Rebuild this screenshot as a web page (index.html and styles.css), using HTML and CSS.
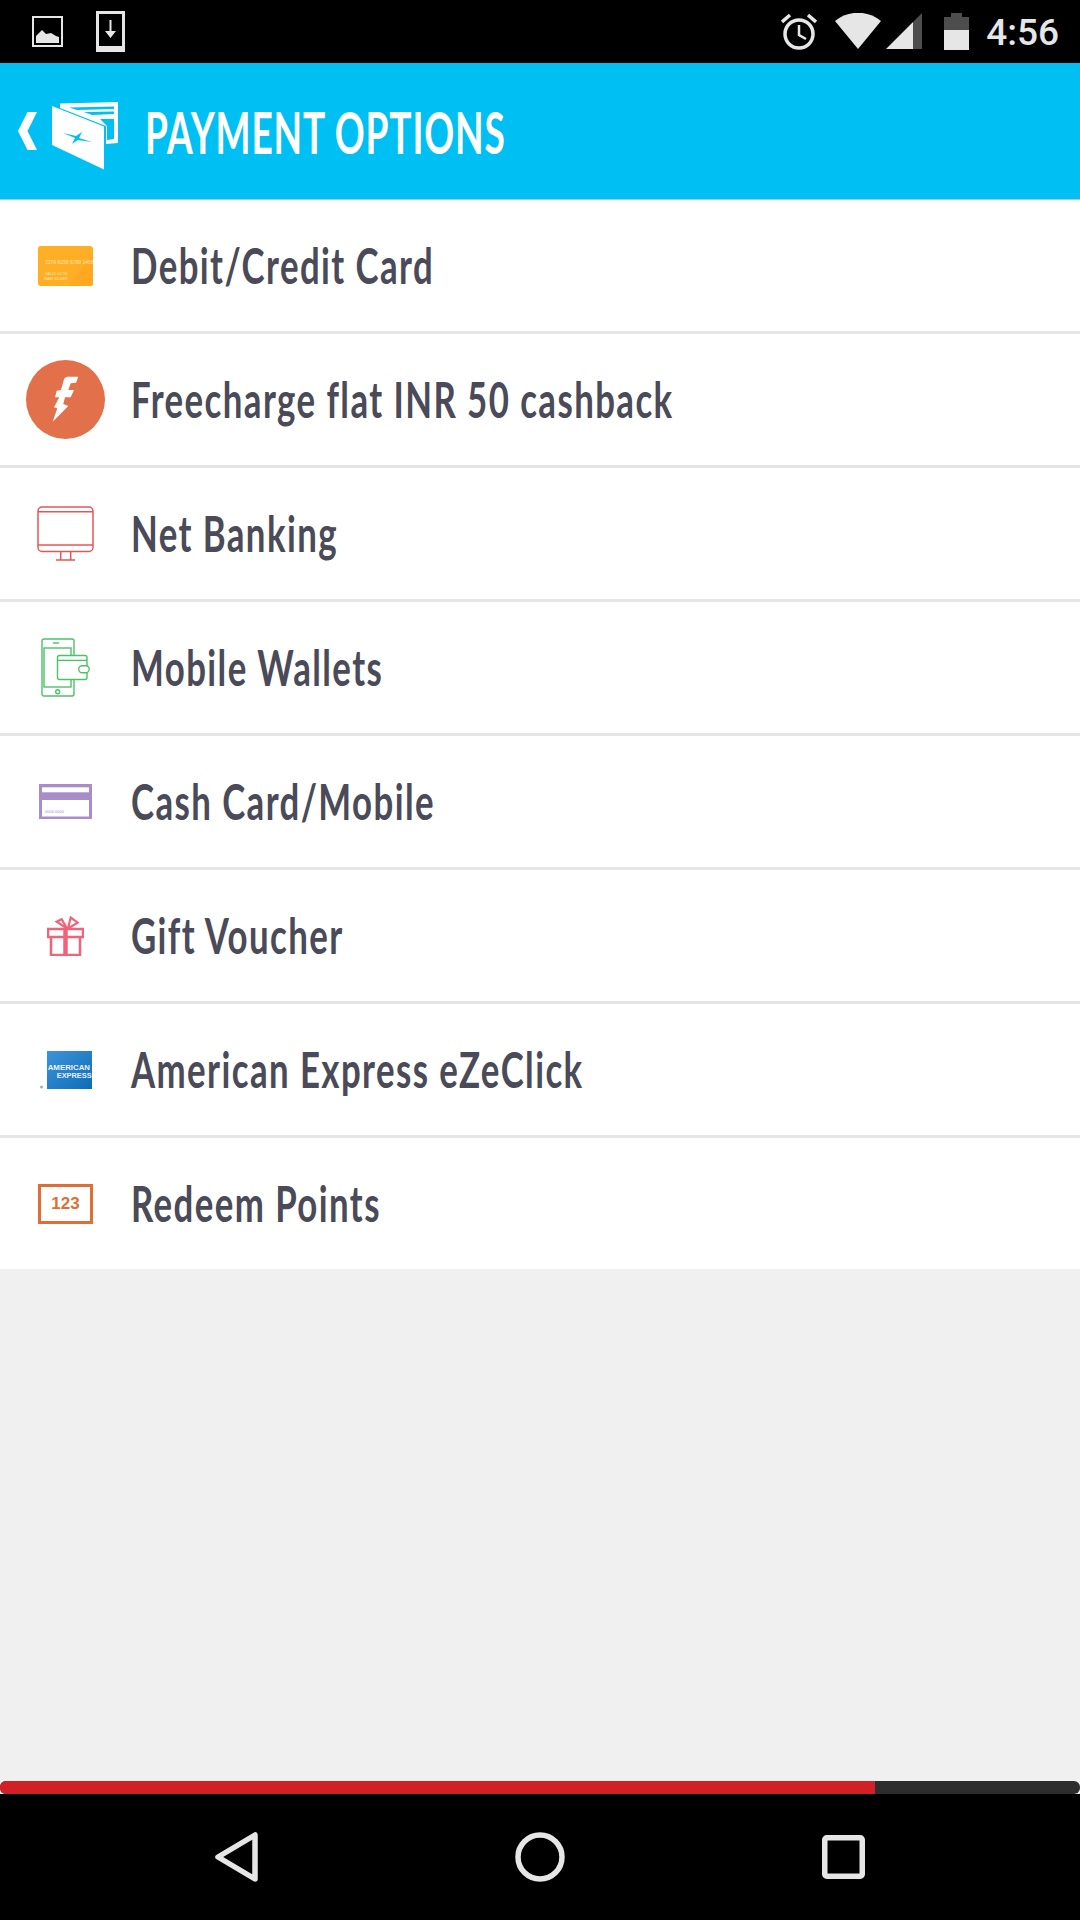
FILE: index.html

```html
<!DOCTYPE html>
<html lang="en">
<head>
  <meta charset="UTF-8">
  <meta name="viewport" content="width=device-width, initial-scale=1.0">
  <title>Payment Options</title>
  <link rel="stylesheet" href="styles.css">
</head>
<body>
  <div class="status-bar">
    <div class="status-left">
      <svg class="ic-image" width="31" height="31" viewBox="0 0 31 31">
        <rect x="1" y="1" width="29" height="29" fill="none" stroke="#e6e6e6" stroke-width="2"/>
        <path d="M4 27V20L10 14L14 18L19 17L24 20L27 21V27Z" fill="#e6e6e6"/>
      </svg>
      <svg class="ic-download" width="29" height="41" viewBox="0 0 29 41">
        <path d="M0 0H29V41H0Z M3 3V35H26V3Z" fill="#e6e6e6" fill-rule="evenodd"/>
        <path d="M13.5 9H15.5V20H20L14.500 27L9 20H13.500Z" fill="#e6e6e6"/>
      </svg>
    </div>
    <div class="status-right">
      <svg class="ic-alarm" width="36" height="37" viewBox="0 0 36 37">
        <circle cx="18" cy="21" r="14" fill="none" stroke="#e6e6e6" stroke-width="3.500"/>
        <path d="M18 12V22L25 26" fill="none" stroke="#e6e6e6" stroke-width="2.500"/>
        <path d="M1 9L9 2M35 9L27 2" stroke="#e6e6e6" stroke-width="3.500"/>
      </svg>
      <svg class="ic-wifi" width="46" height="36" viewBox="0 0 46 36">
        <path d="M0 8C13 -3 33 -3 46 8L23 36Z" fill="#e6e6e6"/>
      </svg>
      <svg class="ic-signal" width="36" height="36" viewBox="0 0 36 36">
        <path d="M27 9V36H0Z" fill="#e6e6e6"/>
        <path d="M27 9L36 0V36H27Z" fill="#4d4d4d"/>
      </svg>
      <svg class="ic-battery" width="25" height="37" viewBox="0 0 25 37">
        <path d="M0 4H7V0H18V4H25V17H0Z" fill="#4d4d4d"/>
        <rect y="17" width="25" height="20" fill="#e6e6e6"/>
      </svg>
      <span class="clock">4:56</span>
    </div>
  </div>

  <header>
    <svg class="back" width="19" height="38" viewBox="0 0 19 38">
      <path d="M9.500 0H19L9.500 19L19 38H9.500L0 19Z" fill="#fff"/>
    </svg>
    <svg class="wallet" width="67" height="68" viewBox="0 0 67 68">
      <path d="M8 1.500L66 0V41L54 42V24L8 6Z" fill="#fff"/>
      <path d="M17 5.500L62 4.500V7L25 8Z M32 10L62 9.500V12L40 13Z M48 17L62 17V37L55 38V24Z" fill="#00bff3"/>
      <path d="M0 4L52 24.500V67.500L0 43Z" fill="#fff"/>
      <path d="M11 31L24 34L30 30L27 36L40 40L26 38L20 42L23 36Z" fill="#00bff3"/>
    </svg>
    <h1 class="title">PAYMENT OPTIONS</h1>
  </header>

  <ul class="options">
    <li>
      <div class="opt-icon">
        <svg width="55" height="40" viewBox="0 0 55 40">
          <rect width="55" height="40" rx="3" fill="#ffae25"/>
          <path d="M30 40L55 8V37C55 39 54 40 52 40Z" fill="#ffa820"/>
          <text class="tiny" x="7" y="18" font-size="5" fill="#ffe6b0">3379 8258 6789 1456</text>
          <text class="tiny" x="7" y="29" font-size="4" fill="#ffe6b0">VALID  07/16</text>
          <text class="tiny" x="6" y="34" font-size="4" fill="#ffe6b0">RAM SILVER</text>
        </svg>
      </div>
      <span class="label">Debit/Credit Card</span>
    </li>
    <li>
      <div class="opt-icon">
        <svg width="79" height="79" viewBox="0 0 79 79">
          <circle cx="39.500" cy="39.500" r="39.500" fill="#e2704b"/>
          <path d="M52.300 16.700L50 22.700L44.700 23.300L42.300 30L48 30L44.700 37.300L39 37.300L37.300 44L42.300 46L26.700 61.700L31.300 48.300L28 47.300L33.300 37.300L29 37.300L30.700 30.700L35 30L37.300 21.700C38 18 40 16.700 42.300 16.700Z" fill="#fff"/>
        </svg>
      </div>
      <span class="label">Freecharge flat INR 50 cashback</span>
    </li>
    <li>
      <div class="opt-icon">
        <svg width="57" height="55" viewBox="0 0 57 55" fill="none" stroke="#e85555" stroke-width="1.500">
          <rect x="1" y="1" width="55" height="44.500" rx="4"/>
          <path d="M1 5.700H56M1 39H56M23.700 45.500V54M33.700 45.500V54M19 54H38"/>
        </svg>
      </div>
      <span class="label">Net Banking</span>
    </li>
    <li>
      <div class="opt-icon">
        <svg width="49" height="59" viewBox="0 0 49 59" fill="none" stroke="#4fc06a" stroke-width="1.400">
          <rect x="1" y="1" width="32" height="57" rx="2"/>
          <rect x="3" y="10" width="27" height="39"/>
          <path d="M12 5H18"/>
          <circle cx="16.700" cy="53.700" r="2"/>
          <rect x="16.500" y="17.500" width="29.500" height="24" rx="2" fill="#fff"/>
          <path d="M16.500 22.400H46"/>
          <rect x="37.700" y="27.700" width="10.500" height="7" rx="3.500" fill="#fff"/>
        </svg>
      </div>
      <span class="label">Mobile Wallets</span>
    </li>
    <li>
      <div class="opt-icon">
        <svg width="53" height="35" viewBox="0 0 53 35">
          <rect width="53" height="35" fill="#a98cc9"/>
          <rect x="3" y="3.300" width="47" height="5" fill="#fff"/>
          <rect x="3" y="16" width="47" height="16.500" fill="#fff"/>
          <text class="tiny" x="6" y="29" font-size="4" fill="#a98cc9">0000 0000</text>
        </svg>
      </div>
      <span class="label">Cash Card/Mobile</span>
    </li>
    <li>
      <div class="opt-icon">
        <svg width="37" height="40" viewBox="0 0 37 40" fill="none" stroke="#f0637a" stroke-width="2.500">
          <path d="M1 13H36V21H1ZM4 21V39H33V21"/>
          <path d="M18.500 13V39" stroke-width="4.500"/>
          <path d="M20 12.500L9.700 5.700L14.700 3.300ZM21 12.500L23.700 1.500L30.700 6.700Z" stroke-width="2.200"/>
        </svg>
      </div>
      <span class="label">Gift Voucher</span>
    </li>
    <li>
      <div class="opt-icon">
        <svg width="52" height="38" viewBox="0 0 52 38">
          <defs>
            <linearGradient id="amexBlue" x1="0" y1="0" x2="1" y2="1">
              <stop offset="0" stop-color="#3d94da"/>
              <stop offset="1" stop-color="#0d6cb8"/>
            </linearGradient>
          </defs>
          <rect x="7" width="45" height="38" fill="url(#amexBlue)"/>
          <circle cx="1.500" cy="36" r="1.500" fill="#8fb6cc"/>
          <text class="amex" x="7.700" y="19" font-size="7.500" textLength="42.300" lengthAdjust="spacingAndGlyphs">AMERICAN</text>
          <text class="amex" x="16.700" y="27" font-size="7.500" textLength="35" lengthAdjust="spacingAndGlyphs">EXPRESS</text>
        </svg>
      </div>
      <span class="label">American Express eZeClick</span>
    </li>
    <li>
      <div class="opt-icon">
        <div class="points">123</div>
      </div>
      <span class="label">Redeem Points</span>
    </li>
  </ul>

  <div class="spacer"></div>

  <div class="progress"><div class="progress-fill"></div></div>

  <nav>
    <svg width="43" height="50" viewBox="0 0 43 50">
      <path d="M40 3V47L3 25Z" fill="none" stroke="#e6e6e6" stroke-width="5.500" stroke-linejoin="round"/>
    </svg>
    <svg width="50" height="50" viewBox="0 0 50 50">
      <circle cx="25" cy="25" r="22" fill="none" stroke="#e6e6e6" stroke-width="5.500"/>
    </svg>
    <svg width="43" height="44" viewBox="0 0 43 44">
      <rect x="2.750" y="2.750" width="37.500" height="38.500" rx="2" fill="none" stroke="#e6e6e6" stroke-width="5.500"/>
    </svg>
  </nav>
</body>
</html>
```

FILE: styles.css

```css
* {
  box-sizing: border-box;
}
html, body {
  margin: 0;
  padding: 0;
}
body {
  width: 1080px;
  height: 1920px;
  display: flex;
  flex-direction: column;
  background: #f0f0f0;
  font-family: Lato, "Liberation Sans", Arial, sans-serif;
}

/* status bar */
.status-bar {
  height: 63px;
  background: #000;
  display: flex;
  justify-content: space-between;
  padding: 11px 21px 0 32px;
}
.status-left {
  display: flex;
  gap: 33px;
  align-items: flex-start;
}
.ic-image {
  margin-top: 5px;
}
.status-right {
  display: flex;
  align-items: flex-start;
}
.ic-alarm {
  margin-top: 2px;
  margin-right: 18px;
}
.ic-wifi {
  margin-top: 2px;
  margin-right: 5px;
}
.ic-signal {
  margin-top: 2px;
  margin-right: 22px;
}
.ic-battery {
  margin-top: 2px;
  margin-right: 17px;
}
.clock {
  font-family: Roboto, sans-serif;
  font-size: 37px;
  font-weight: 500;
  line-height: 43px;
  color: #e6e6e6;
}

/* header */
header {
  height: 137px;
  background: #00bff3;
  border-bottom: 1px solid #8fd0e8;
  display: flex;
  align-items: center;
  padding-left: 18px;
  color: #fff;
}
.back {
  margin-right: 15px;
}
.wallet {
  margin-top: 9px;
  margin-right: 26px;
}
.title {
  margin: 1px 0 0;
  font-size: 57px;
  font-weight: bold;
  letter-spacing: 1.3px;
  white-space: nowrap;
  transform: scaleX(0.65);
  transform-origin: left center;
}

/* payment list */
.options {
  list-style: none;
  margin: 0;
  padding: 0;
  background: #fff;
}
.options li {
  height: 134px;
  display: flex;
  align-items: center;
  border-bottom: 3px solid #e5e5e5;
}
.options li:last-child {
  height: 131px;
  border-bottom: none;
}
.opt-icon {
  width: 131px;
  flex: none;
  display: flex;
  justify-content: center;
  align-items: center;
}
.label {
  margin-top: -2px;
  font-size: 49px;
  font-weight: bold;
  letter-spacing: 2px;
  color: #4a4a58;
  white-space: nowrap;
  transform: scaleX(0.71);
  transform-origin: left center;
}
.tiny {
  font-family: "Liberation Sans", sans-serif;
}
.amex {
  font-family: "Liberation Sans", sans-serif;
  font-weight: bold;
  fill: #e8f3fb;
}
.points {
  width: 55px;
  height: 40px;
  border: 3px solid #dd6e36;
  color: #dd6e36;
  font-family: "Liberation Sans", sans-serif;
  font-size: 17px;
  font-weight: bold;
  line-height: 34px;
  text-align: center;
}

.spacer {
  flex: 1;
}

/* video progress */
.progress {
  height: 13px;
  background: #2d2d2d;
  border-radius: 6px;
  overflow: hidden;
}
.progress-fill {
  width: 875px;
  height: 100%;
  background: #d32027;
}

/* nav bar */
nav {
  height: 126px;
  background: #000;
  display: flex;
  align-items: center;
  gap: 257px;
  padding-left: 215px;
}
```
